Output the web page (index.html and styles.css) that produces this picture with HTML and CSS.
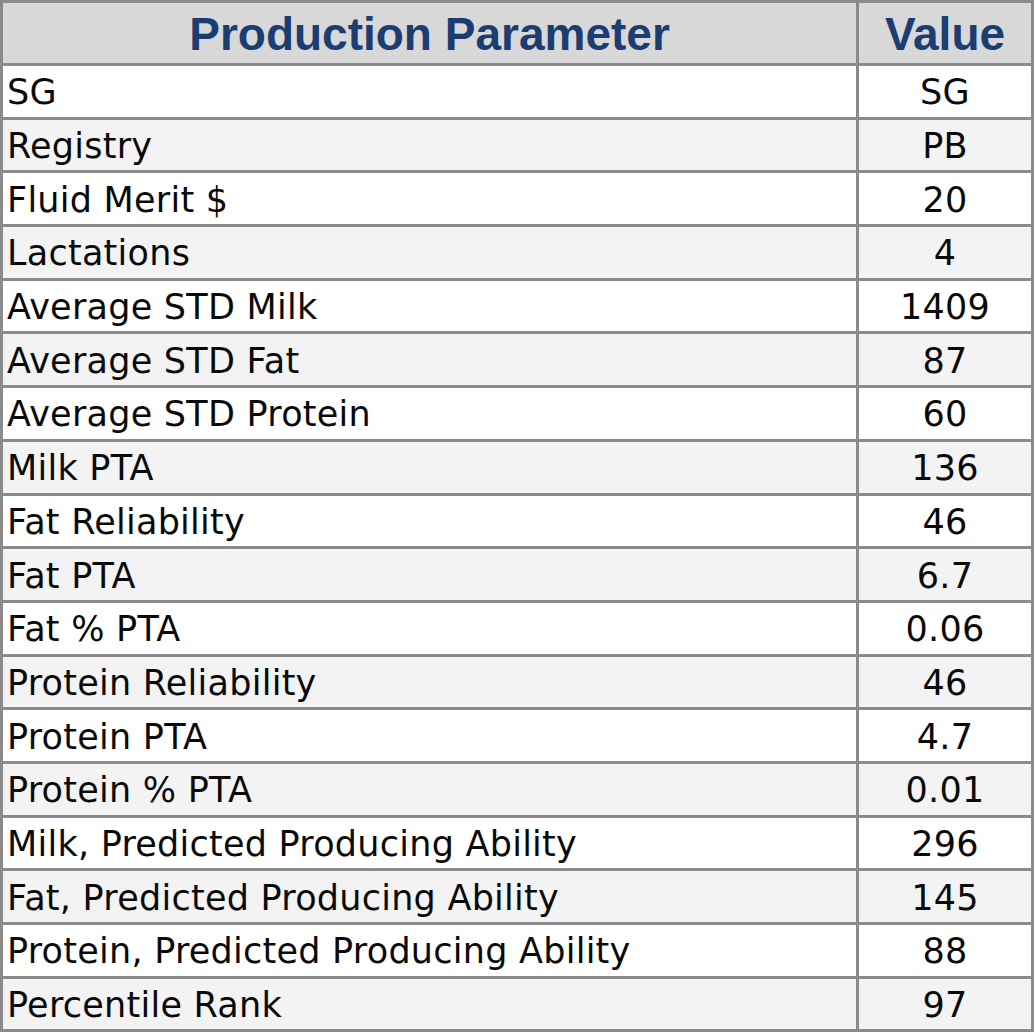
FILE: index.html
```html
<!DOCTYPE html>
<html>
<head>
<meta charset="utf-8">
<link rel="stylesheet" href="styles.css">
</head>
<body>
<table class="params">
  <thead>
    <tr><th class="col-name">Production Parameter</th><th class="col-value">Value</th></tr>
  </thead>
  <tbody>
    <tr><td>SG</td><td class="val">SG</td></tr>
    <tr><td>Registry</td><td class="val">PB</td></tr>
    <tr><td>Fluid Merit $</td><td class="val">20</td></tr>
    <tr><td>Lactations</td><td class="val">4</td></tr>
    <tr><td>Average STD Milk</td><td class="val">1409</td></tr>
    <tr><td>Average STD Fat</td><td class="val">87</td></tr>
    <tr><td>Average STD Protein</td><td class="val">60</td></tr>
    <tr><td>Milk PTA</td><td class="val">136</td></tr>
    <tr><td>Fat Reliability</td><td class="val">46</td></tr>
    <tr><td>Fat PTA</td><td class="val">6.7</td></tr>
    <tr><td>Fat % PTA</td><td class="val">0.06</td></tr>
    <tr><td>Protein Reliability</td><td class="val">46</td></tr>
    <tr><td>Protein PTA</td><td class="val">4.7</td></tr>
    <tr><td>Protein % PTA</td><td class="val">0.01</td></tr>
    <tr><td>Milk, Predicted Producing Ability</td><td class="val">296</td></tr>
    <tr><td>Fat, Predicted Producing Ability</td><td class="val">145</td></tr>
    <tr><td>Protein, Predicted Producing Ability</td><td class="val">88</td></tr>
    <tr><td>Percentile Rank</td><td class="val">97</td></tr>
  </tbody>
</table>
</body>
</html>
```
FILE: styles.css
```css
html, body {
  margin: 0;
  padding: 0;
  background: #ffffff;
}

.params {
  width: 1034px;
  border-collapse: collapse;
  table-layout: fixed;
  font-family: "DejaVu Sans", Verdana, sans-serif;
  font-size: 35px;
  letter-spacing: 0.25px;
  color: #0a0a0a;
}

.params th,
.params td {
  border: 3px solid #8b8b8b;
  padding: 0 4px;
  line-height: 1;
}

.params th {
  background: #d8d8d8;
  color: #1b3d72;
  font-family: "Liberation Sans", Arial, sans-serif;
  font-weight: bold;
  font-size: 46px;
  letter-spacing: 0;
  height: 58px;
  padding-top: 2px;
  text-align: center;
}

.col-value {
  width: 164px;
}

.params td {
  height: 47.7px;
  padding-top: 3px;
  text-align: left;
  white-space: nowrap;
}

.params td.val {
  text-align: center;
}

.params tbody tr:nth-child(even) td {
  background: #f3f3f3;
}
```
